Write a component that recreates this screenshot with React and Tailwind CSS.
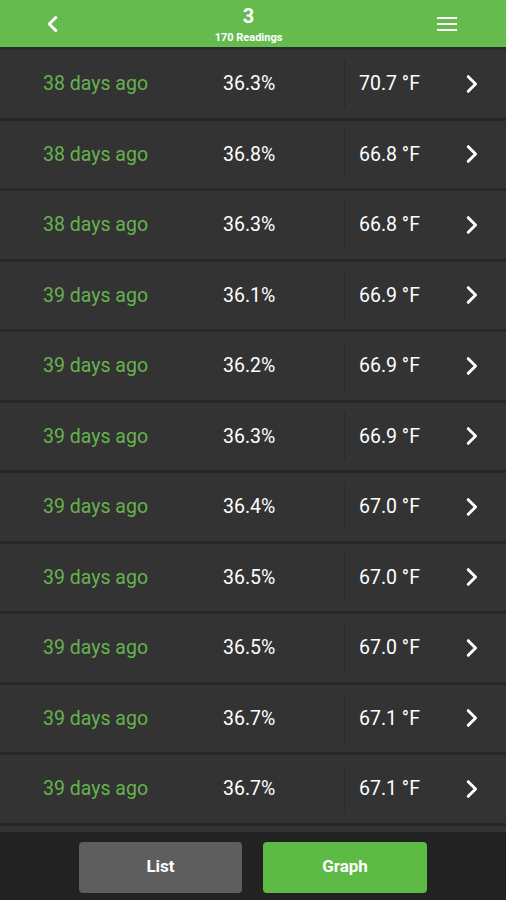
const rows = [
  ["38 days ago", "36.3%", "70.7 °F"],
  ["38 days ago", "36.8%", "66.8 °F"],
  ["38 days ago", "36.3%", "66.8 °F"],
  ["39 days ago", "36.1%", "66.9 °F"],
  ["39 days ago", "36.2%", "66.9 °F"],
  ["39 days ago", "36.3%", "66.9 °F"],
  ["39 days ago", "36.4%", "67.0 °F"],
  ["39 days ago", "36.5%", "67.0 °F"],
  ["39 days ago", "36.5%", "67.0 °F"],
  ["39 days ago", "36.7%", "67.1 °F"],
  ["39 days ago", "36.7%", "67.1 °F"],
];

const Chevron = ({ dir = "right", className = "" }) => (
  <svg viewBox="0 0 24 24" className={className} fill="none" stroke="currentColor" strokeWidth="3.2" strokeLinecap="round" strokeLinejoin="round">
    {dir === "right" ? <path d="M9 4l8 8-8 8" /> : <path d="M15 5l-7 7 7 7" />}
  </svg>
);

const Row = ({ ago, hum, temp }) => (
  <div className="h-[70.5px] shrink-0 flex items-center bg-[#333333] border-b-[3px] border-[#272727] text-[19.5px]">
    <div className="w-[223px] pl-[43px] text-[#66b24e]">{ago}</div>
    <div className="w-[121px] text-white">{hum}</div>
    <div className="w-px h-[48px] bg-[#2a2a2a]"></div>
    <div className="flex-1 pl-[14px] text-white">{temp}</div>
    <Chevron className="w-[22px] h-[22px] text-white mr-[24px]" />
  </div>
);

export default function App() {
  return (
    <div className="w-[506px] h-[900px] flex flex-col bg-[#333333] overflow-hidden" style={{ fontFamily: "Roboto, 'Liberation Sans', sans-serif" }}>
      <header className="h-[50px] shrink-0 bg-[#66bb4f] border-b-[3px] border-[#2a2a2a] flex items-center justify-between pl-[42px] pr-[49px] text-white">
        <Chevron dir="left" className="w-[22px] h-[22px]" />
        <div className="flex flex-col items-center leading-none pt-[2px] mr-[4px]">
          <span className="text-[20px] font-bold">3</span>
          <span className="text-[11px] font-bold mt-[6px]">170 Readings</span>
        </div>
        <div className="flex flex-col gap-[4px] w-[20px]">
          <span className="h-[2px] bg-white"></span>
          <span className="h-[2px] bg-white"></span>
          <span className="h-[2px] bg-white"></span>
        </div>
      </header>
      <main className="flex-1 flex flex-col overflow-hidden">
        {rows.map((r, i) => (
          <Row key={i} ago={r[0]} hum={r[1]} temp={r[2]} />
        ))}
        <div className="flex-1 bg-[#333333]"></div>
      </main>
      <footer className="h-[68px] shrink-0 bg-[#222222] flex items-center justify-center gap-[21px] pt-[2px]">
        <button className="w-[163px] h-[51px] rounded-[4px] bg-[#5e5e5e] text-white font-bold text-[17px]">List</button>
        <button className="w-[164px] h-[51px] rounded-[4px] bg-[#5dbb45] text-white font-bold text-[17px]">Graph</button>
      </footer>
    </div>
  );
}
